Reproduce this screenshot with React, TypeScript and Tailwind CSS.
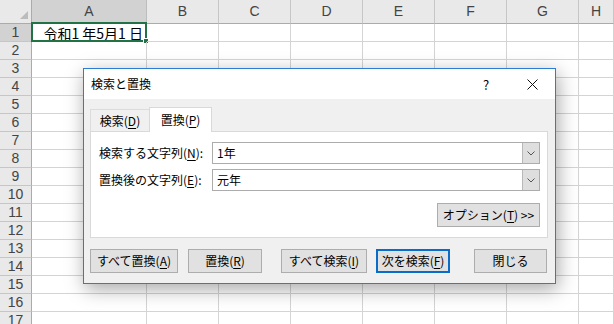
import React from "react";

const COLS = ["A", "B", "C", "D", "E", "F", "G", "H"];
const ROWS = Array.from({ length: 17 }, (_, i) => i + 1);

function Dropdown() {
  return (
    <div className="w-[17px] h-full bg-[#dedede] border-l border-[#b8b8b8] flex items-center justify-center">
      <svg width="8" height="5" viewBox="0 0 8 5">
        <path d="M0.5 0.5 L4 4 L7.5 0.5" fill="none" stroke="#555" strokeWidth="1" />
      </svg>
    </div>
  );
}

function ComboRow({ label, hot, rest, value, first }: { label: string; hot: string; rest: string; value: string; first?: boolean }) {
  return (
    <div className={`flex items-center h-[22px] ${first ? "" : "mt-[5px]"}`}>
      <div className="w-[113px]">
        {label}(<span className="underline underline-offset-[2px]">{hot}</span>){rest}
      </div>
      <div className="flex-1 h-full flex border border-[#acacac] bg-white">
        <div className="flex-1 flex items-center pl-[4px]">{value}</div>
        <Dropdown />
      </div>
    </div>
  );
}

function Btn({ children, w, ml, primary }: { children: React.ReactNode; w: string; ml: string; primary?: boolean }) {
  return (
    <div
      className={`${w} ${ml} h-[24px] flex items-center justify-center bg-[#e1e1e1] ${
        primary ? "border-2 border-[#0a6cc9]" : "border border-[#adadad]"
      }`}
    >
      {children}
    </div>
  );
}

function U({ c }: { c: string }) {
  return <span className="underline underline-offset-[2px]">{c}</span>;
}

function Dialog() {
  return (
    <div className="absolute left-[83px] top-[68px] w-[473px] h-[216px] border border-[#2b7cd3] bg-[#f0f0f0] shadow-[2px_5px_18px_rgba(0,0,0,0.35)] flex flex-col text-[12px] leading-none text-black font-['Noto_Sans_CJK_JP','Noto_Sans',sans-serif]">
      {/* title bar */}
      <div className="h-[30px] bg-white flex items-center pl-[7px]">
        <span>検索と置換</span>
        <div className="ml-auto w-[46px] h-full flex items-center justify-center text-[13px]">?</div>
        <div className="w-[46px] h-full flex items-center justify-center">
          <svg width="11" height="11" viewBox="0 0 11 11">
            <path d="M0.5 0.5 L10.5 10.5 M10.5 0.5 L0.5 10.5" stroke="#111" strokeWidth="1" />
          </svg>
        </div>
      </div>

      {/* tabs */}
      <div className="mt-[8px] ml-[6px] h-[24px] flex items-end relative z-10">
        <div className="w-[59px] h-[22px] flex items-center justify-center border-l border-t border-[#dcdcdc] bg-[#f0f0f0]">
          検索(<U c="D" />)
        </div>
        <div className="w-[63px] h-[25px] -mb-px flex items-center justify-center border-x border-t border-[#d9d9d9] bg-white">
          置換(<U c="P" />)
        </div>
      </div>

      {/* panel */}
      <div className="ml-[6px] mr-[7px] h-[107px] border border-[#d9d9d9] bg-white pl-[8px] pr-[7px] pt-[10px] flex flex-col">
        <ComboRow first label="検索する文字列" hot="N" rest=":" value="1年" />
        <ComboRow label="置換後の文字列" hot="E" rest=":" value="元年" />
        <div className="self-end mt-[12px] w-[103px] h-[24px] flex items-center justify-center bg-[#e1e1e1] border border-[#adadad]">
          オプション(<U c="T" />) &gt;&gt;
        </div>
      </div>

      {/* buttons */}
      <div className="mt-[11px] flex">
        <Btn w="w-[88px]" ml="ml-[6px]">
          すべて置換(<U c="A" />)
        </Btn>
        <Btn w="w-[74px]" ml="ml-[10px]">
          置換(<U c="R" />)
        </Btn>
        <Btn w="w-[86px]" ml="ml-[19px]">
          すべて検索(<U c="I" />)
        </Btn>
        <Btn w="w-[74px]" ml="ml-[9px]" primary>
          次を検索(<U c="F" />)
        </Btn>
        <Btn w="w-[73px]" ml="ml-[24px]">
          閉じる
        </Btn>
      </div>
    </div>
  );
}

export default function App() {
  return (
    <div className="relative w-[614px] h-[324px] overflow-hidden bg-white">
      <div className="grid grid-cols-[32px_115px_72px_72px_72px_72px_72px_72px_1fr]">
        {/* corner */}
        <div className="h-[24px] bg-[#e9e9e9] border-r border-b border-[#ababab] flex items-end justify-end pr-[3px] pb-[4px]">
          <svg width="8" height="8" viewBox="0 0 8 8">
            <polygon points="8,0 8,8 0,8" fill="#bcbcbc" />
          </svg>
        </div>
        {COLS.map((c, i) => (
          <div
            key={c}
            className={`h-[24px] border-r border-b flex items-center justify-center text-[14px] text-[#444] font-['Liberation_Sans',sans-serif] ${
              i === 0 ? "bg-[#d2d2d2] border-r-[#bdbdbd] border-b-[#217346]" : "bg-[#e9e9e9] border-r-[#c6c6c6] border-b-[#ababab]"
            }`}
          >
            {c}
          </div>
        ))}

        {ROWS.map((r) => (
          <React.Fragment key={r}>
            <div
              className={`h-[18px] border-r border-b flex items-center justify-center text-[14px] text-[#444] font-['Liberation_Sans',sans-serif] ${
                r === 1 ? "bg-[#d2d2d2] border-r-[#217346] border-b-[#c6c6c6]" : "bg-[#e9e9e9] border-r-[#ababab] border-b-[#c6c6c6]"
              }`}
            >
              {r}
            </div>
            {COLS.map((c) => (
              <div key={c} className="relative h-[18px] border-r border-b border-[#d4d4d4]">
                {r === 1 && c === "A" && (
                  <>
                    <div className="h-full flex items-center justify-end pr-[3px] text-[14px] leading-none text-black font-['Noto_Sans_CJK_JP',sans-serif]">
                      令和1 年5月1 日
                    </div>
                    <div className="absolute -left-[1px] -top-[2px] -right-[1px] -bottom-[1px] border-2 border-[#217346]" />
                    <div className="absolute -right-[3px] -bottom-[3px] w-[6px] h-[6px] bg-[#217346] border border-white" />
                  </>
                )}
              </div>
            ))}
          </React.Fragment>
        ))}
      </div>

      <Dialog />
    </div>
  );
}
